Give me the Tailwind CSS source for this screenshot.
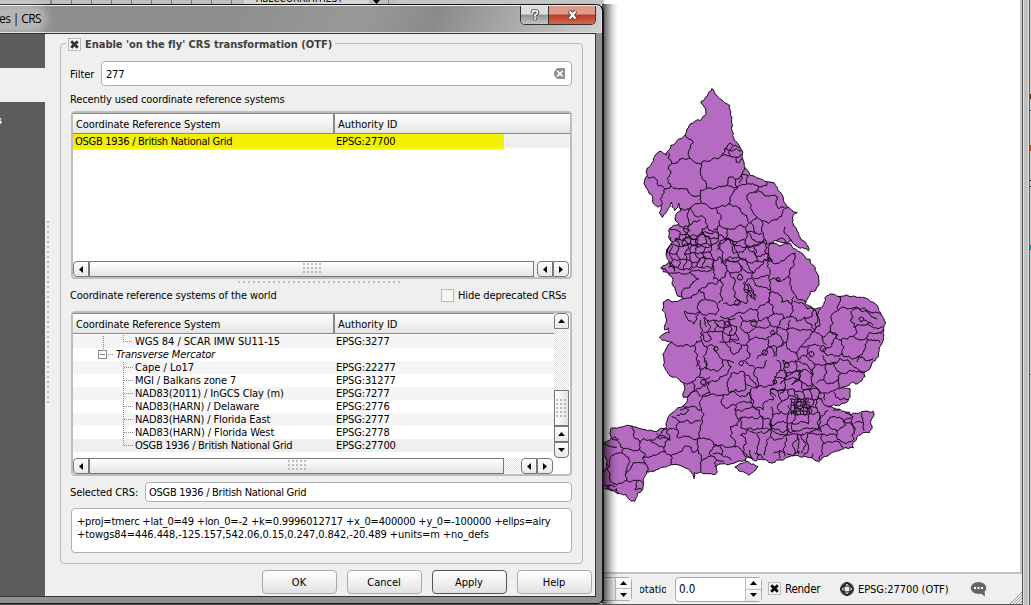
<!DOCTYPE html>
<html lang="en">
<head>
<meta charset="utf-8">
<title>Project Properties | CRS</title>
<script src="https://cdn.jsdelivr.net/npm/@tailwindcss/browser@4"></script>
</head>
<body class="relative h-[605px] w-[1031px] overflow-hidden bg-[#c4c4c4] text-[11px] leading-[13px] whitespace-nowrap text-black [font-family:'DejaVu_Sans_Condensed','DejaVu_Sans',sans-serif] [font-stretch:condensed]">

<svg class="hidden">
  <symbol id="cross" viewBox="0 0 9 9"><path d="M1.2 1.2 7.8 7.8M7.8 1.2 1.2 7.8" stroke="currentColor" stroke-width="2.8"/></symbol>
  <symbol id="left" viewBox="0 0 4 7"><path d="M4 0V7L0 3.5Z"/></symbol>
  <symbol id="right" viewBox="0 0 4 7"><path d="M0 0V7L4 3.5Z"/></symbol>
  <symbol id="up" viewBox="0 0 7 4"><path d="M0 4H7L3.5 0Z"/></symbol>
  <symbol id="down" viewBox="0 0 7 4"><path d="M0 0H7L3.5 4Z"/></symbol>
</svg>

<!-- Main window -->
<div class="flex h-full w-full">
  <main class="flex w-[1022px] flex-col bg-[#efefef]">
    <div class="h-[574px] border-r-2 border-b-2 border-[#c4c4c4] bg-white">
      <svg id="map" class="block h-[572px] w-[1020px]" viewBox="0 0 1020 572">
        <defs><clipPath id="land"><path id="landClip"/></clipPath></defs>
        <g stroke="#0c0410" stroke-width="1" stroke-linejoin="round">
          <path id="coast" fill="#b56bc1"/>
          <path id="isle" fill="#b56bc1"/>
          <path id="borders" fill="none" clip-path="url(#land)"/>
        </g>
      </svg>
    </div>
    <footer class="flex h-[31px] items-center border-b border-[#555] pl-[600px]">
      <div class="flex h-6 w-[32px] rounded-sm border border-[#aaa] bg-[#efefef]">
        <div class="ml-auto flex w-4 flex-col border-l border-[#bbb] bg-gradient-to-b from-white to-[#eee]">
          <div class="flex h-[11px] items-center justify-center border-b border-[#bbb]"><svg class="h-1 w-[7px]"><use href="#up"/></svg></div>
          <div class="flex h-[11px] items-center justify-center"><svg class="h-1 w-[7px]"><use href="#down"/></svg></div>
        </div>
      </div>
      <div class="mt-px ml-[8px] flex w-[26px] justify-center overflow-hidden"><span>Rotation</span></div>
      <div class="ml-[9px] flex h-[25px] w-[87px] items-center rounded-sm border border-[#aaa] bg-white pl-[3px]">
        <span class="mt-px text-[11.5px]">0.0</span>
        <div class="ml-auto flex h-full w-4 flex-col border-l border-[#bbb] bg-gradient-to-b from-white to-[#eee]">
          <div class="flex h-[12px] items-center justify-center border-b border-[#bbb]"><svg class="h-1 w-[7px]"><use href="#up"/></svg></div>
          <div class="flex h-[11px] items-center justify-center"><svg class="h-1 w-[7px]"><use href="#down"/></svg></div>
        </div>
      </div>
      <div class="-mt-px ml-[6px] flex size-[13px] items-center justify-center border border-[#bbb] bg-[#f7f7f7]"><svg class="size-[9px]"><use href="#cross"/></svg></div>
      <span class="ml-1 w-[53px] text-[11.5px] tracking-[-0.25px]">Render</span>
      <svg class="ml-px size-4" viewBox="0 0 16 16" fill="none"><circle cx="8" cy="8" r="7" fill="#555"/><path d="M8 1.500 14.500 8 8 14.500 1.500 8Z" fill="#ddd" stroke="#111" stroke-width="1.200"/><ellipse cx="8" cy="8" rx="3" ry="6.500" stroke="#222"/><ellipse cx="8" cy="8" rx="6.500" ry="3" stroke="#222"/><rect x="6" y="6" width="4" height="4" fill="#eee"/></svg>
      <span class="mt-px ml-[3px] w-[92px] tracking-[-0.05px]">EPSG:27700 (OTF)</span>
      <svg class="ml-[20px] size-[17px]" viewBox="0 0 17 17"><ellipse cx="8.5" cy="7" rx="7.8" ry="6" fill="#666"/><path d="M10 12 15 15.5 14.5 9Z" fill="#666"/><path d="M4 7h2M7.5 7h2M11 7h2" stroke="#fff" stroke-width="1.8"/></svg>
      <svg class="mt-auto ml-auto size-3" viewBox="0 0 12 12" stroke="#999"><path d="M0 12 12 0M3 12 12 3M6 12 12 6M9 12 12 9"/></svg>
    </footer>
  </main>
  <div class="w-[8px] border-x border-[#555] bg-[linear-gradient(90deg,#ddd_1px,#c0c0c0_1px_5px,#e4e4e4_5px)]"></div>
  <div class="flex flex-1 flex-col bg-[#d4d4d4]">
    <i class="mt-[94px] h-[5px] bg-[#5a3010]"></i><i class="mt-[11px] h-px bg-[#444]"></i><i class="mt-[34px] h-[6px] bg-[#b5500c]"></i><i class="mt-[29px] h-px bg-black"></i><i class="mt-[5px] h-px bg-black"></i><i class="mt-[58px] h-[5px] bg-[#1583b5]"></i><i class="mt-[124px] h-px bg-[#888]"></i>
  </div>
</div>

<!-- Toolbar strip behind the dialog -->
<div class="absolute top-0 left-0 flex h-[5px] w-[604px] overflow-hidden bg-[#bebebe]">
  <div class="h-full w-[52px] border-r-2 border-[#888]"></div>
  <div class="h-full w-[184px] bg-[repeating-linear-gradient(90deg,transparent_0_19px,#777_19px_20px)]"></div>
  <div class="relative ml-2 h-full w-[125px] bg-[#d6d6d6]"><span class="absolute -top-[8px] left-3 text-[10px]">ABLCCORRIATHEST</span></div>
  <svg class="ml-1 h-1 w-[7px]"><use href="#down"/></svg>
  <div class="ml-2 h-full w-px bg-[#888]"></div><div class="ml-2 h-full flex-1 bg-[#c4c4c4]"></div>
</div>

<!-- Shadow of the dialog on the canvas -->
<div class="absolute top-1 left-[602px] h-[600px] w-[16px] bg-[linear-gradient(90deg,rgba(0,0,0,0.75),rgba(0,0,0,0.4)_35%,rgba(0,0,0,0.12)_70%,transparent)]"></div>

<!-- Dialog -->
<section class="absolute top-1 left-0 flex h-[600px] w-[604px] flex-col rounded-tr-lg rounded-br-md border-y border-r-2 border-[#151515] bg-[#909090]">
  <header class="flex h-[28px] items-start rounded-tr-md border-t border-r border-b border-t-[#eee] border-r-[#ddd] border-b-[#ddd] bg-[linear-gradient(115deg,#8e8e8e_0_38%,#999_60%,#8a8a8a_72%,#b2b2b2_88%,#d0d0d0)]">
    <div class="mt-[3px] h-[20px] w-[42px] rounded-r-full bg-white/35 shadow-[0_0_8px_5px_rgba(255,255,255,0.35)]"><span class="-ml-px text-xs leading-[19px] [font-family:'Open_Sans',sans-serif] [font-stretch:normal] tracking-[-0.6px]">es | CRS</span></div>
    <div class="mr-[5px] ml-auto flex h-[19px] w-[76px] overflow-hidden rounded-b-[5px] border border-t-0 border-[#333]">
      <div class="flex w-[28px] items-center justify-center border-r border-[#333] bg-[linear-gradient(#ddd_0_45%,#929292_50%,#c4c4c4)]">
        <svg class="h-[12px] w-[12px] overflow-visible" viewBox="0 0 14 14" fill="none"><path d="M4 5V3.5Q4 2 7 2T10 4.2Q10 5.7 7 7V9M7 10.5V13" stroke="#445" stroke-width="4"/><path d="M4 5V3.5Q4 2 7 2T10 4.2Q10 5.7 7 7V9M7 10.5V12.5" stroke="#fff" stroke-width="2"/></svg>
      </div>
      <div class="flex flex-1 items-center justify-center bg-[linear-gradient(#dc9a8c_0_45%,#bb3a22_50%,#d2674c)]">
        <svg class="h-[10px] w-[13px] overflow-visible" viewBox="0 0 13 11"><path d="M3 1 10 10M10 1 3 10" stroke="#544" stroke-width="4.6"/><path d="M3.3 1.5 9.7 9.5M9.7 1.5 3.3 9.5" stroke="#fff" stroke-width="2.6"/></svg>
      </div>
    </div>
  </header>

  <div class="mr-[6px] flex h-[564px] border-y border-r border-[#333] bg-[#efefef]">
    <aside class="flex w-[45px] flex-col bg-[#5c5c5c] text-white">
      <div class="mt-[34px] h-[34px] bg-[#efefef]"></div>
      <span class="mt-[12px] -ml-1 font-bold">s</span>
    </aside>
    <div class="mt-[187px] ml-[2px] h-[184px] w-[5px] bg-[conic-gradient(at_2px_2px,transparent_75%,#bdbdbd_0)] bg-[length:5px_5px]"></div>

    <div class="ml-2 flex flex-1 flex-col">
      <fieldset class="relative mt-[9px] flex h-[521px] w-[523px] flex-col rounded-sm border border-[#b9b9b9] px-[10px]">
        <div class="absolute -top-[6px] left-[5px] flex h-[13px] items-center bg-[#efefef] px-[2px]">
          <div class="flex size-[13px] items-center justify-center border border-[#bbb] bg-[#f7f7f7] text-[#333]"><svg class="size-[9px]"><use href="#cross"/></svg></div>
          <b class="ml-1 w-[248px] text-[#404040] tracking-[-0.02px]">Enable 'on the fly' CRS transformation (OTF)</b>
        </div>

        <div class="mt-[17px] flex h-[25px] items-center">
          <label class="-ml-px w-[31px] pt-px">Filter</label>
          <div class="flex h-full flex-1 items-center rounded-sm border border-[#b0b0b0] bg-white pr-[6px] pl-1"><span class="pt-px tracking-[-0.2px]">277</span>
            <svg class="ml-auto h-[11px] w-[11px]" viewBox="0 0 11 11"><path d="M3 0H11V11H3L0 7V4Z" fill="#929292"/><path d="M3.2 3 8.6 8.4M8.6 3 3.2 8.4" stroke="#fff" stroke-width="1.6"/></svg>
          </div>
        </div>
        <p class="mt-[7px] -ml-px h-[13px] tracking-[-0.13px]">Recently used coordinate reference systems</p>

        <!-- Recently used table -->
        <div class="mt-[5px] flex h-[168px] flex-col rounded-sm border-2 border-[#bdbdbd] bg-white">
          <div class="flex h-[21px] items-center border-y border-[#888] bg-gradient-to-b from-white to-[#e4e4e4]">
            <span class="h-full w-[262px] border-r-2 border-[#888] pl-[3px] leading-[21px] tracking-[-0.11px]">Coordinate Reference System</span><span class="pt-px pl-[3px]">Authority ID</span>
          </div>
          <div class="flex h-[16px] bg-[linear-gradient(#f0f0f0_0_14px,#fff_14px)]">
            <div class="flex w-[431px] bg-[linear-gradient(#f0f000_0_14px,#ff0_14px)]"><span class="w-[263px] pl-[2px] leading-[15px] tracking-[-0.28px]">OSGB 1936 / British National Grid</span><span class="leading-[15px] tracking-[-0.15px]">EPSG:27700</span></div>
          </div>
          <div class="mt-auto flex h-4 [&>*]:border [&>*]:border-[#777]">
            <div class="flex w-4 items-center justify-center bg-gradient-to-b from-white to-[#e8e8e8] rounded-l-sm"><svg class="h-[7px] w-1"><use href="#left"/></svg></div>
            <div class="flex w-[445px] items-center justify-center border-l-2 bg-gradient-to-b from-white to-[#e4e4e4]"><i class="h-[12px] w-[18px] bg-[conic-gradient(at_2px_2px,transparent_75%,#bbb_0)] bg-[length:4px_4px]"></i></div>
            <div class="flex-1 !border-0 bg-[repeating-conic-gradient(#e2e2e2_0_25%,#fff_0_50%)] bg-[length:2px_2px]"></div>
            <div class="flex w-4 items-center justify-center rounded-l-sm bg-gradient-to-b from-white to-[#e8e8e8]"><svg class="h-[7px] w-1"><use href="#left"/></svg></div>
            <div class="mr-px flex w-4 items-center justify-center rounded-r-sm bg-gradient-to-b from-white to-[#e8e8e8]"><svg class="h-[7px] w-1"><use href="#right"/></svg></div>
          </div>
        </div>
        <div class="mt-[2px] ml-[167px] h-[2px] w-[163px] bg-[conic-gradient(at_2px_2px,transparent_75%,#bdbdbd_0)] bg-[length:5px_5px]"></div>

        <div class="mt-[6px] -ml-px flex h-[13px] items-center">
          <span class="w-[371px] tracking-[-0.11px]">Coordinate reference systems of the world</span>
          <div class="size-[13px] border border-[#bbb] bg-[#f7f7f7]"></div>
          <span class="ml-1 tracking-[-0.1px]">Hide deprecated CRSs</span>
        </div>

        <!-- World table -->
        <div class="mt-[9px] flex h-[165px] flex-col rounded-sm border-2 border-[#bdbdbd] bg-white">
          <div class="flex h-[145px]">
            <div class="flex w-[481px] flex-col">
              <div class="flex h-[21px] shrink-0 items-center border-y border-[#888] bg-gradient-to-b from-white to-[#e4e4e4]">
                <span class="h-full w-[262px] border-r-2 border-[#888] pl-[3px] leading-[21px] tracking-[-0.11px]">Coordinate Reference System</span><span class="pt-px pl-[3px]">Authority ID</span>
              </div>
              <div class="relative mt-px tracking-[-0.12px] [&>div]:flex [&>div]:h-[13px] [&>div]:leading-[14px] [&>div>span:first-child]:w-[263px] [&>div>span:first-child]:pl-[62px]">
                <div class="bg-[#f5f5f5]"><span class="tracking-[-0.03px]">WGS 84 / SCAR IMW SU11-15</span><span>EPSG:3277</span></div>
                <div class="italic"><span class="!pl-[43px]">Transverse Mercator</span></div>
                <div class="bg-[#f5f5f5]"><span class="tracking-[0.02px]">Cape / Lo17</span><span>EPSG:22277</span></div>
                <div><span>MGI / Balkans zone 7</span><span>EPSG:31277</span></div>
                <div class="bg-[#f5f5f5]"><span>NAD83(2011) / InGCS Clay (m)</span><span>EPSG:7277</span></div>
                <div><span>NAD83(HARN) / Delaware</span><span>EPSG:2776</span></div>
                <div class="bg-[#f5f5f5]"><span>NAD83(HARN) / Florida East</span><span>EPSG:2777</span></div>
                <div><span class="tracking-[-0.08px]">NAD83(HARN) / Florida West</span><span>EPSG:2778</span></div>
                <div class="bg-[#efefef]"><span class="tracking-[-0.28px]">OSGB 1936 / British National Grid</span><span>EPSG:27700</span></div>
                <svg class="absolute top-0 left-0 h-[117px] w-[62px]" fill="none" stroke="#888" shape-rendering="crispEdges">
                  <path stroke-dasharray="1 1" d="M30.5 1V14M50.5 0V6.500H60M35 19.500H40M50.500 27V110.500H60M50.500 32.500H60M50.500 45.500H60M50.500 58.500H60M50.500 71.500H60M50.500 84.500H60M50.500 97.500H60"/>
                  <path d="M25.500 15.500H33.500V23.500H25.500ZM27 19.500H32"/>
                </svg>
              </div>
            </div>
            <div class="flex w-[15px] flex-col [&>*]:border [&>*]:border-[#777]">
              <div class="flex h-4 items-center justify-center rounded-t-sm bg-gradient-to-b from-white to-[#e8e8e8]"><svg class="h-1 w-[7px]"><use href="#up"/></svg></div>
              <div class="h-[61px] !border-0 bg-[repeating-conic-gradient(#e2e2e2_0_25%,#fff_0_50%)] bg-[length:2px_2px]"></div>
              <div class="flex h-[36px] items-center justify-center bg-gradient-to-r from-white to-[#e4e4e4]"><i class="h-[18px] w-[11px] bg-[conic-gradient(at_2px_2px,transparent_75%,#bbb_0)] bg-[length:4px_4px]"></i></div>
              <div class="flex h-4 items-center justify-center bg-gradient-to-b from-white to-[#e8e8e8]"><svg class="h-1 w-[7px]"><use href="#up"/></svg></div>
              <div class="flex h-4 items-center justify-center rounded-b-sm bg-gradient-to-b from-white to-[#e8e8e8]"><svg class="h-1 w-[7px]"><use href="#down"/></svg></div>
            </div>
          </div>
          <div class="flex h-4 w-[480px] [&>*]:border [&>*]:border-[#777]">
            <div class="flex w-4 items-center justify-center rounded-l-sm bg-gradient-to-b from-white to-[#e8e8e8]"><svg class="h-[7px] w-1"><use href="#left"/></svg></div>
            <div class="flex w-[415px] items-center justify-center border-l-2 bg-gradient-to-b from-white to-[#e4e4e4]"><i class="h-[12px] w-[18px] bg-[conic-gradient(at_2px_2px,transparent_75%,#bbb_0)] bg-[length:4px_4px]"></i></div>
            <div class="flex-1 !border-0 bg-[repeating-conic-gradient(#e2e2e2_0_25%,#fff_0_50%)] bg-[length:2px_2px]"></div>
            <div class="flex w-4 items-center justify-center rounded-l-sm bg-gradient-to-b from-white to-[#e8e8e8]"><svg class="h-[7px] w-1"><use href="#left"/></svg></div>
            <div class="flex w-4 items-center justify-center rounded-r-sm bg-gradient-to-b from-white to-[#e8e8e8]"><svg class="h-[7px] w-1"><use href="#right"/></svg></div>
          </div>
        </div>

        <div class="mt-[6px] flex h-5 items-center">
          <label class="-ml-px w-[75px] tracking-[-0.1px]">Selected CRS:</label>
          <div class="flex h-full flex-1 items-center rounded-sm border border-[#b0b0b0] bg-white pt-px pl-[3px] tracking-[-0.28px]">OSGB 1936 / British National Grid</div>
        </div>
        <div class="mt-[6px] h-[45px] rounded-sm border border-[#b0b0b0] bg-white pt-[6px] pl-[5px]">
          <p class="tracking-[-0.18px]">+proj=tmerc +lat_0=49 +lon_0=-2 +k=0.9996012717 +x_0=400000 +y_0=-100000 +ellps=airy</p>
          <p class="tracking-[-0.08px]">+towgs84=446.448,-125.157,542.06,0.15,0.247,0.842,-20.489 +units=m +no_defs</p>
        </div>
      </fieldset>

      <div class="mt-[6px] ml-[202px] flex gap-[10px] [&>button]:h-6 [&>button]:w-[75px] [&>button]:rounded-sm [&>button]:border [&>button]:border-[#aaa] [&>button]:bg-gradient-to-b [&>button]:from-white [&>button]:to-[#e2e2e2] [&>button]:pr-px">
        <button>OK</button><button>Cancel</button><button class="!border-[#555]">Apply</button><button>Help</button>
      </div>
    </div>
  </div>
</section>

<script>
// District map. Each sheet holds polylines on a 3x grid from its own origin.
let seed = 7;
const rnd = () => (seed = (seed * 16807) % 2147483647) / 2147483647;
const pts = (ox, oy, s) => s.trim().split(/\s+/).map(p => { const [x, y] = p.split(',').map(Number); return [ox + x / 3, oy + y / 3]; });
let jag = 0.35;
function rough(a, b, out) {
  const dx = b[0] - a[0], dy = b[1] - a[1];
  if (Math.hypot(dx, dy) < 2.2) { out.push(b); return; }
  const k = (rnd() - 0.5) * jag, m = [(a[0] + b[0]) / 2 - dy * k, (a[1] + b[1]) / 2 + dx * k];
  rough(a, m, out); rough(m, b, out);
}
function line(p) {
  const out = [p[0]];
  for (let i = 1; i < p.length; i++) rough(p[i - 1], p[i], out);
  return 'M' + out.map(q => q[0].toFixed(1) + ' ' + q[1].toFixed(1)).join('L');
}
const N = s => pts(630, 80, s), M = s => pts(640, 240, s), S = s => pts(600, 360, s);

const coast = line([
  ...N('245,26 252,34 262,48 278,62 292,72 299,76 302,100 306,130 310,160 318,185 334,208 336,230 342,250 346,264 356,275 360,286 380,294 408,304 432,308 442,322 456,344 462,366 480,386 502,398 492,404 488,418 500,450 516,480 534,498 536,512 524,506 500,498 484,482 460,488 430,484 430,489 460,493 480,490 498,508 516,520 537,538'),
  ...M('510,58 526,84 536,108 537,134 528,150 512,154 506,170 498,182 496,190 512,198 520,205 542,204 552,190 556,172 566,166 600,170 640,168 664,172 690,184 716,208 728,232 732,270 730,300 720,320 716,350'),
  ...S('826,2 812,20 800,34 792,38 795,50 785,62 766,72 758,66 748,76 722,84 750,86 750,104 745,120 730,130 700,134 684,140 700,144 720,148 748,156 752,166 776,160 820,154 820,170 812,190 816,206 808,218 784,222 770,234 758,250 760,264 735,262 720,270 700,276 688,282 672,290 656,306 640,298 610,290 590,286 560,292 530,300 516,310 500,300 480,298 460,300 444,290 436,296 438,302 425,304 405,308 380,314 350,318 352,335 345,344 325,342 300,336 282,338 282,356 276,340 262,326 240,316 215,314 190,322 165,332 140,336 134,350 130,370 126,390 112,400 104,424 88,418 78,404 50,400 30,390 8,386 0,380 0,256 8,250 32,236 32,206 60,202 95,198 120,206 150,210 190,206 200,200 202,180 215,160 230,146 250,136 262,116 285,92 268,106 250,112 250,70 235,56 210,48 195,25'),
  ...M('72,360 70,340 82,320 96,306 80,304 58,292 72,282 88,278 86,264 74,270 80,240 76,220 66,210 70,186 84,178 104,184 120,180 130,176 112,168 106,150 96,130 100,120 84,100 62,84 76,76 88,66 104,94 80,50 80,30 90,18'),
  ...N('110,520 116,500 128,486 116,470 118,446 130,436 146,432 136,420 140,400 154,392 146,370 134,392 124,366 108,398 98,412 88,398 92,376 84,382 70,370 66,346 54,330 42,310 52,288 52,264 70,236 80,222 94,214 110,226 116,210 122,196 140,184 166,164 170,148 186,130 210,122 228,100 220,76 212,66 224,58 236,38 245,26')
]) + 'Z';
const isle = line(S('405,322 430,308 444,304 460,312 474,320 462,334 446,346 428,334 405,322')) + 'Z';

const north = `116,218 125,250 145,244 170,238 180,234|166,164 176,178 190,188 182,205 180,234 200,250 215,250|125,250 114,264 122,282 112,296 122,318 104,326
|52,290 76,296 100,322 104,326 96,346 98,370 92,380|122,318 150,326 180,340 210,346|215,250 212,270 216,290 228,308 232,324 212,330 210,346 214,368|215,250 240,244 262,236 275,226
|275,226 284,206 300,190 316,196 334,210|275,226 300,228 318,232 334,222|284,206 306,214 334,212|300,228 306,200|318,232 318,246 326,248 336,236
|232,324 262,322 285,318 292,314 296,292 316,298 334,286 356,288|316,298 322,320|334,286 330,310|356,288 350,312|344,264 338,276 334,286|292,314 322,320 350,312 384,318 408,316
|322,320 306,344 300,366 296,372 258,384|214,368 230,374 258,384 274,406 270,436|146,380 160,390 182,384 192,374 214,368|182,384 190,400 212,408 228,420 232,440 248,456 262,446 270,436
|296,372 312,380 330,384 344,404 358,428 346,442|270,436 296,446 320,440 346,442|384,318 374,336 350,346 358,368 366,392 382,412 360,428|374,336 400,340 436,346 438,372 448,386 458,380 490,392
|382,412 396,424 430,420 456,408 462,388|396,424 394,450 396,488|346,442 350,456 372,480 396,488 430,488|360,428 376,460 396,462|350,456 376,460|408,318 408,304
|182,384 172,410 174,440|174,440 190,424 212,420|146,432 174,440 172,460 150,462|118,446 140,450 150,462 146,480 128,486|172,460 184,476|184,476 210,466 216,446 232,440
|262,446 280,470 290,480 292,446|290,480 270,490 260,510|290,480 320,486 346,480 350,456|320,486 306,500 310,520|346,480 352,500 340,516 310,520|352,500 372,498 396,488|466,440 462,456 474,468 486,484`;
const mid = `66,84 100,100 120,98 150,96 180,92 220,88|150,96 176,118 156,132 150,142 130,150 128,172|176,150 170,162 154,174 130,176|176,150 200,140 204,130 240,120 246,140 240,160 248,180 236,190
|220,88 222,60 240,50 250,70 262,90 256,110 240,122 220,116 222,88|176,150 192,158 196,176 174,190 172,206 180,214 150,220 134,214 136,226 154,244 162,252 168,230 180,214|196,176 214,182 232,196 228,224 200,226 180,214
|254,72 262,60 280,66 300,74 306,92 288,96 270,98 262,90|270,98 286,120 280,140 282,170 300,184|262,60 290,64 318,62 340,100|300,74 320,96 338,100 336,116 310,130 312,150 324,160
|338,100 356,84 372,60 384,54 382,80 386,108 360,112 338,118|384,54 400,70 430,62 452,44 466,40 462,70 450,90 446,110 455,140 460,160 470,176 496,186|386,108 388,124 404,114 424,124 446,112
|338,118 346,136 370,142 392,150 388,160|390,124 392,150|388,160 412,158 424,170 424,186 456,188 462,170|388,160 386,176 360,196 350,210|386,176 400,200 400,222 384,234 356,242 350,210|456,188 460,210 452,230 432,236 424,222 400,222
|462,184 490,190 520,208 516,230 492,232 470,244 452,230|520,208 530,216 526,250 524,270 540,258 542,206|524,270 510,290 494,308 484,320|384,234 390,256 412,262 424,240 432,236|412,262 410,280 428,300 424,318 410,324
|412,262 440,270 444,290 438,306 424,318|440,270 470,268 500,270 524,274 546,290 560,284 592,284|440,270 452,240|492,232 506,250 524,270|596,168 602,180 592,200 596,210 630,206 654,204 676,212 694,230 712,238|654,204 690,216 724,226
|596,210 574,236 580,250 570,258 576,280 592,284 588,296 604,300 624,296 640,288|654,204 634,214 640,232 632,244 646,262 650,280 640,288|640,262 664,254 700,262 728,262|670,240 700,256|680,292 690,276 730,270|640,288 660,300 680,292 684,300 720,308
|604,300 612,320 606,340 610,350 640,356 662,344|606,340 596,350 560,346 548,330|592,284 580,306 574,320 548,330|680,300 672,330 656,350 652,366|656,350 680,362 700,356|546,290 548,304 560,316|484,320 500,322 520,314 540,320
|484,320 470,340 474,360|410,324 408,350|438,306 450,330 470,344|300,184 320,190 324,160|350,210 330,206 300,216 280,228 262,234 240,228|300,184 276,196 250,190|356,242 330,240 310,242 300,262|310,242 300,226
|300,262 322,278 328,300 320,316|322,278 350,262 384,262 390,256|328,300 350,292 380,296 384,290 410,280|384,296 386,320 410,324|255,310 280,344 296,336 302,314 320,316|255,310 300,308|320,316 330,340 318,360|386,320 372,340 350,356|386,320 400,350
|96,306 120,318 150,320 162,316 184,300 188,270 180,240|162,316 172,350 168,380|184,300 200,320 224,320 232,340 250,360 282,368|324,130 340,150 350,170|312,150 330,156 346,180|384,54 388,10 450,12|340,20 350,50 384,40
|200,320 190,350 200,380|550,346 560,370 590,372|500,350 520,372|506,322 500,350 474,360|314,130 326,144 322,160 334,172|324,150 340,160 346,178`;
const south = `296,0 298,26 330,30 362,24 366,0|300,26 296,50 275,66 250,70|385,0 384,40 360,50 326,66|318,0 318,28|300,86 326,66 330,100 306,108 302,122 304,150|285,92 300,86|285,92 300,110|275,66 285,92|296,50 320,66|330,50 310,60
|306,108 330,104 350,108 370,104 388,98 384,60 394,40 420,34 434,40 436,70 430,92 388,98|370,104 366,134 384,144 408,136|388,98 450,96 456,130 408,136 404,150 410,170 418,180 412,196 390,200 392,230 404,260 380,262 360,256
|304,150 306,180 302,210 298,234 320,238 340,254 360,256|250,140 280,138 304,150|215,170 240,186 260,180 302,184|240,150 266,150 256,162 230,166|205,210 230,206 240,186|230,206 232,232 258,228 298,234
|200,204 210,236 192,262 196,274|150,240 170,232 212,240|170,220 200,232|150,240 120,246 118,268 70,266 50,240 34,236|95,198 102,210 100,226 120,246|150,240 176,258 192,262|118,268 134,280 128,294 138,314 140,336|170,232 186,214 200,206
|128,294 150,290 180,278 196,274 208,284 216,296 212,314|28,320 30,296 50,280 66,278 86,292 84,316 78,340 80,358|28,320 22,330 34,366 50,376 80,358|70,266 66,278|78,340 100,308 120,308 136,314|80,358 108,360 128,368|8,290 20,310 28,320|8,256 50,262
|212,290 240,276 260,258 274,262 276,276 294,270 298,234|294,270 306,302 302,334|306,302 332,288 338,262 360,256|332,288 350,300 345,320|360,256 370,290 392,300|404,260 430,276 440,290|338,280 366,284|350,300 372,306
|436,70 470,84 456,60 436,44|466,26 466,50 470,84 500,80 522,74 524,50 540,30|456,84 452,110 458,140 490,150 496,126 520,120 516,84|404,150 440,146 458,140 478,150 482,168 430,172 416,176|482,168 486,206 440,208 422,204 424,172|486,206 512,208 508,176 482,168
|422,226 440,210 470,222 472,260 476,286|422,226 440,250 430,276|472,218 510,208 512,230 500,256 494,286|512,230 550,232 560,226|508,190 560,226 590,226 586,282|558,232 550,270 552,290|560,226 562,196|590,218 626,220 622,250 626,266 610,286|608,220 606,280|594,226 596,282
|626,220 668,222 674,250 668,280 660,300|668,222 710,228|674,250 700,246 720,250 730,262|656,206 660,170 684,150|684,180 700,170 730,186 736,196 710,214 684,196 684,180|730,186 758,190 764,212 760,240 740,250 710,228|710,214 710,228|626,220 656,206 684,196
|758,170 764,212|764,190 790,188 786,160|790,188 792,212|540,30 560,40 600,36|596,40 620,30 640,44 640,76 604,84 598,60 596,40|640,44 646,10|646,14 680,12 680,40 670,60 650,70|680,12 700,10 720,38 716,60 700,70 680,70 670,60
|720,38 750,30 795,40|716,60 722,86|744,0 760,20 800,34|640,76 660,100 690,96 720,86|650,110 670,130 684,140|700,96 720,120 745,118|670,100 676,120|540,30 530,0|466,26 440,10 430,0|466,26 490,24 500,0|590,30 586,0|524,50 560,60 598,60|560,40 556,80 540,100|516,84 556,90|700,150 740,160 758,170 730,186|700,10 744,0
|450,270 460,296|476,286 470,298|464,280 490,296|430,276 452,296|520,280 552,280|540,270 540,296|560,280 600,276|640,280 636,294|10,370 50,386 56,400|30,372 20,392|110,364 104,390 126,388|20,376 46,380|36,236 44,230 56,240`;
let d = '';
jag = 0.5;
[[N, north], [M, mid], [S, south]].forEach(([f, s]) => s.split('|').forEach(p => { d += line(f(p)); }));

// Loops for the small town districts
[[M,300,112,9],[M,292,188,9],[M,342,250,10],[M,264,250,8],[M,374,338,9],[M,514,342,8],[M,548,326,9],[M,664,238,7],[M,414,118,6],[M,398,278,7],[S,310,66,8],[S,424,10,7],[S,560,16,8],[S,524,66,7],[M,228,326,7]].forEach(([f, x, y, r]) => {
  const s = [];
  for (let i = 0; i <= 6; i++) s.push((x + r * Math.cos(i * 1.0472)) + ',' + (y + r * Math.sin(i * 1.0472)));
  d += line(f(s.join(' ')));
});

// Dense urban districts as jittered meshes
function mesh(f, x, y, w, h, nx, ny, keep) {
  const g = [];
  for (let j = 0; j <= ny; j++) { g[j] = []; for (let i = 0; i <= nx; i++) g[j][i] = f((x + (i + (j % 2) * 0.4 + (rnd() - 0.5) * 0.6) * w / nx) + ',' + (y + (j + (rnd() - 0.5) * 0.6) * h / ny))[0]; }
  for (let j = 0; j <= ny; j++) for (let i = 0; i <= nx; i++) {
    if (i < nx && rnd() < keep) d += line([g[j][i], g[j][i + 1]]);
    if (j < ny && rnd() < keep) d += line([g[j][i], g[j + 1][i]]);
  }
}
mesh(M, 88, -5, 122, 88, 6, 4, 0.85);
mesh(N, 160, 450, 90, 45, 3, 2, 0.8);
mesh(M, 225, 5, 150, 50, 3, 1, 0.85);
mesh(M, 188, 236, 95, 66, 5, 3, 0.8);
mesh(S, 512, 90, 140, 122, 6, 5, 0.75);
mesh(S, 572, 118, 55, 45, 6, 5, 0.8);
mesh(S, 545, 8, 80, 70, 2, 2, 0.7);

document.getElementById('coast').setAttribute('d', coast);
document.getElementById('landClip').setAttribute('d', coast);
document.getElementById('isle').setAttribute('d', isle);
document.getElementById('borders').setAttribute('d', d);
</script>
</body>
</html>
